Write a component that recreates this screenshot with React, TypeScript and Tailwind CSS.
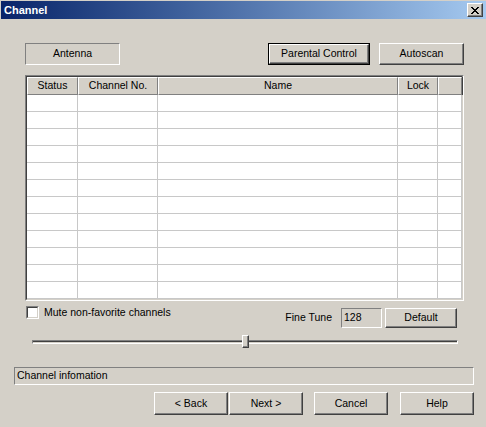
const raised =
  "border border-t-white border-l-white border-r-[#404040] border-b-[#404040] shadow-[inset_-1px_-1px_0_#808080]";
const sunken = "border border-t-[#808080] border-l-[#808080] border-r-white border-b-white";

const cols = [
  { label: "Status", w: "w-[51px]" },
  { label: "Channel No.", w: "w-[80px]" },
  { label: "Name", w: "w-[240px]" },
  { label: "Lock", w: "w-[40px]" },
  { label: "", w: "flex-1" },
];

const rows = Array.from({ length: 12 }, (_, i) => i);

function Button({ label, className = "" }: { label: string; className?: string }) {
  return (
    <div className={`flex items-center justify-center bg-[#d4d0c8] ${raised} ${className}`}>
      {label}
    </div>
  );
}

export default function App() {
  return (
    <div
      className="w-[486px] h-[427px] bg-[#d4d0c8] flex flex-col overflow-hidden text-[10.5px] text-black"
      style={{ fontFamily: '"Liberation Sans", Arial, sans-serif' }}
    >
      {/* title bar */}
      <div className="mt-[1px] ml-[1px] h-[18px] flex items-center bg-gradient-to-r from-[#0a246a] to-[#a6caf0]">
        <span className="ml-[3px] text-[11px] font-bold text-white">Channel</span>
        <div className={`ml-auto mr-[3px] w-[16px] h-[14px] bg-[#d4d0c8] flex items-center justify-center ${raised}`}>
          <svg width="8" height="7" viewBox="0 0 8 7" shapeRendering="crispEdges">
            <path
              d="M0 0h2v1h-2zM6 0h2v1h-2zM1 1h2v1h-2zM5 1h2v1h-2zM2 2h4v1h-4zM3 3h2v1h-2zM2 4h4v1h-4zM1 5h2v1h-2zM5 5h2v1h-2zM0 6h2v1h-2zM6 6h2v1h-2z"
              fill="#000"
            />
          </svg>
        </div>
      </div>

      {/* top row */}
      <div className="mt-[24px] h-[22px] flex">
        <div className={`ml-[25px] w-[95px] flex items-center justify-center ${sunken}`}>Antenna</div>
        <div className="ml-[148px] w-[102px] border border-black flex">
          <Button label="Parental Control" className="flex-1" />
        </div>
        <Button label="Autoscan" className="ml-[9px] w-[85px]" />
      </div>

      {/* channel list */}
      <div className={`mt-[10px] ml-[25px] w-[439px] h-[226px] flex ${sunken}`}>
        <div className="flex-1 flex flex-col border border-t-[#404040] border-l-[#404040] border-r-[#d4d0c8] border-b-[#d4d0c8] bg-white">
          <div className="h-[18px] flex bg-[#d4d0c8]">
            {cols.map((c, i) => (
              <div
                key={i}
                className={`${c.w} flex items-center justify-center border-t border-l border-t-white border-l-white border-r border-b border-r-[#808080] border-b-[#808080] shadow-[1px_0_0_#404040]`}
              >
                {c.label}
              </div>
            ))}
          </div>
          {rows.map((r) => (
            <div key={r} className="h-[17px] flex">
              {cols.map((c, i) => (
                <div key={i} className={`${c.w} border-r border-b border-[#c8c8c8]`} />
              ))}
            </div>
          ))}
        </div>
      </div>

      {/* options row */}
      <div className="mt-[5px] h-[22px] flex items-start">
        <div className="ml-[26px] w-[13px] h-[13px] flex border border-t-[#808080] border-l-[#808080] border-r-white border-b-white">
          <div className="flex-1 bg-white border border-t-[#404040] border-l-[#404040] border-r-[#d4d0c8] border-b-[#d4d0c8]" />
        </div>
        <span className="ml-[5px] leading-[13px]">Mute non-favorite channels</span>
        <div className="ml-auto mr-[29px] mt-[2px] flex items-center">
          <span>Fine Tune</span>
          <div className={`ml-[9px] w-[41px] h-[20px] flex items-center pl-[2px] ${sunken}`}>128</div>
          <Button label="Default" className="ml-[3px] w-[72px] h-[20px]" />
        </div>
      </div>

      {/* slider */}
      <div className="mt-[7px] h-[13px] ml-[32px] w-[426px] relative flex items-center">
        <div className="w-full h-[4px] flex border border-t-[#808080] border-l-[#808080] border-r-white border-b-white">
          <div className="flex-1 border-t border-t-[#404040]" />
        </div>
        <div className={`absolute left-[210px] top-0 w-[7px] h-[13px] bg-[#d4d0c8] ${raised}`} />
      </div>

      {/* status */}
      <div className={`mt-[19px] ml-[14px] w-[460px] h-[18px] flex items-center pl-[2px] ${sunken}`}>
        Channel infomation
      </div>

      {/* buttons */}
      <div className="mt-[7px] h-[23px] flex">
        <Button label="< Back" className="ml-[154px] w-[74px]" />
        <Button label="Next >" className="ml-[1px] w-[74px]" />
        <Button label="Cancel" className="ml-[11px] w-[74px]" />
        <Button label="Help" className="ml-[12px] w-[74px]" />
      </div>
    </div>
  );
}
